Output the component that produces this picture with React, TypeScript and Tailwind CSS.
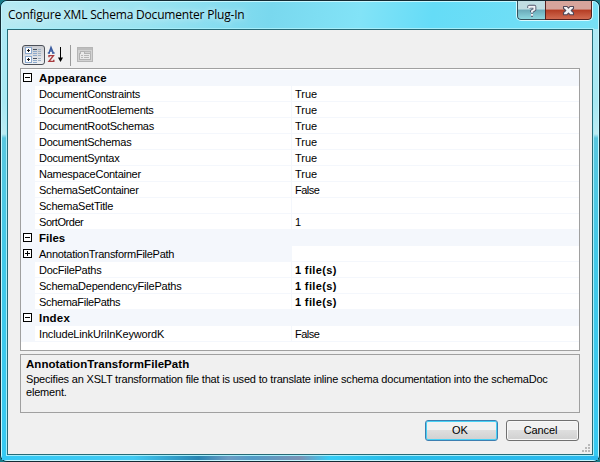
import React from "react";

type Row = { kind: "category" | "item" | "parent"; name: string; value?: string; bold?: boolean; track?: string };

const rows: Row[] = [
  { kind: "category", name: "Appearance", track: "tracking-[0.2px]" },
  { kind: "item", name: "DocumentConstraints", value: "True", track: "tracking-[-0.25px]" },
  { kind: "item", name: "DocumentRootElements", value: "True", track: "tracking-[-0.23px]" },
  { kind: "item", name: "DocumentRootSchemas", value: "True", track: "tracking-[-0.22px]" },
  { kind: "item", name: "DocumentSchemas", value: "True", track: "tracking-[-0.24px]" },
  { kind: "item", name: "DocumentSyntax", value: "True", track: "tracking-[-0.24px]" },
  { kind: "item", name: "NamespaceContainer", value: "True", track: "tracking-[-0.25px]" },
  { kind: "item", name: "SchemaSetContainer", value: "False", track: "tracking-[-0.28px]" },
  { kind: "item", name: "SchemaSetTitle", value: "", track: "tracking-[-0.22px]" },
  { kind: "item", name: "SortOrder", value: "1", track: "tracking-[-0.44px]" },
  { kind: "category", name: "Files" },
  { kind: "parent", name: "AnnotationTransformFilePath", value: "", track: "tracking-[-0.28px]" },
  { kind: "item", name: "DocFilePaths", value: "1 file(s)", bold: true, track: "tracking-[-0.25px]" },
  { kind: "item", name: "SchemaDependencyFilePaths", value: "1 file(s)", bold: true, track: "tracking-[-0.22px]" },
  { kind: "item", name: "SchemaFilePaths", value: "1 file(s)", bold: true, track: "tracking-[-0.33px]" },
  { kind: "category", name: "Index", track: "tracking-[0.2px]" },
  { kind: "item", name: "IncludeLinkUriInKeywordK", value: "False", track: "tracking-[-0.16px]" },
];

function Expander({ plus }: { plus?: boolean }) {
  return (
    <svg width="9" height="9" viewBox="0 0 9 9" shapeRendering="crispEdges" className="block">
      <rect x=".5" y=".5" width="8" height="8" fill="#fff" stroke="#000" />
      <path d={plus ? "M2 4.5h5M4.5 2v5" : "M2 4.5h5"} stroke="#000" />
    </svg>
  );
}

function GridRow({ row }: { row: Row }) {
  const category = row.kind === "category";
  const valueStyle = row.bold ? "font-bold tracking-[0.35px]" : row.value === "False" ? "tracking-[-0.5px]" : "";
  return (
    <div className="flex h-4 bg-[#f4f7fc]">
      <div className="w-[14px] shrink-0 pl-[2px] pt-[3px]">
        {row.kind !== "item" && <Expander plus={row.kind === "parent"} />}
      </div>
      {category ? (
        <div className={`flex-1 pl-1 text-[11.5px] font-bold leading-4 ${row.track ?? ""}`}>{row.name}</div>
      ) : (
        <>
          <div
            className={`w-[256px] shrink-0 border-b border-[#f4f7fc] pl-1 leading-4 ${row.track ?? ""} ${row.kind === "item" ? "bg-white" : "bg-[#f4f7fc]"}`}
          >
            {row.name}
          </div>
          <div className={`ml-px flex-1 border-b border-[#f4f7fc] bg-white pl-[3px] leading-4 ${valueStyle}`}>
            {row.value}
          </div>
        </>
      )}
    </div>
  );
}

function Toolbar() {
  return (
    <div className="flex h-[23px] shrink-0 items-start pl-[2px]">
      <div className="h-[20px] w-[23px] rounded-[3px] border border-[#4d5159] bg-gradient-to-b from-[#c9cbd0] to-[#eef0f3]">
        <svg width="21" height="18" viewBox="0 0 21 18" shapeRendering="crispEdges" className="block">
          <rect x="2.5" y="1.5" width="6" height="6" fill="#fff" stroke="#8ba9ce" />
          <rect x="2.5" y="10.5" width="6" height="6" fill="#fff" stroke="#8ba9ce" />
          <path d="M4 4.5h3M5.5 3v3M4 13.5h3M5.5 12v3" stroke="#111" />
          <path d="M10 3.5h4M10 12.5h4" stroke="#48515d" />
          <path d="M10 5.5h4M10 7.5h4M10 9.5h4M10 14.5h4M10 16.5h4" stroke="#8ca9cb" />
          <path d="M15 3.5h3M15 5.5h3M15 7.5h3M15 9.5h3M15 12.5h3M15 14.5h3" stroke="#9fb1c4" />
        </svg>
      </div>
      <svg width="16" height="20" viewBox="0 0 16 20" className="ml-[2px]" fill="none">
        <path d="M.8 8h2.2M5 8h2.6M2 8l2-5.8L6.4 8M2.8 6h2.8" stroke="#395b9f" strokeWidth="1.3" />
        <path d="M2 12.2v-1.6h4.4L2 16.4h4.8v-1.6" stroke="#a83b3e" strokeWidth="1.4" />
        <path d="M13.5 2v12" stroke="#000" />
        <path d="M11 12.5h5l-2.5 4.5z" fill="#000" />
      </svg>
      <div className="ml-[7px] h-[21px] w-px bg-[#9a9a9a]" />
      <svg width="16" height="16" viewBox="0 0 16 16" className="ml-[6px] mt-[2px]" shapeRendering="crispEdges" fill="none">
        <rect x=".5" y=".5" width="15" height="14" fill="#d2d2d2" stroke="#b5b5b5" />
        <path d="M1 1.5h14" stroke="#bdbdbd" strokeWidth="2" />
        <path d="M2.5 12.5v-6h1v-2h4v2h6v6z" fill="#e9e9e9" stroke="#b2b2b2" />
        <path d="M8 4.5h5v2" stroke="#b7b7b7" />
        <path d="M4 8.5h2M7 8.5h5M4 10.5h2M7 10.5h5" stroke="#b7b7b7" />
      </svg>
    </div>
  );
}

function CaptionButtons() {
  return (
    <div className="mr-[5px] mt-[-1px] flex h-[20px] w-[77px] overflow-hidden rounded-b-[5px] border border-t-0 border-[#d9faff]">
      <div className="flex w-[28px] justify-center rounded-bl-[4px] border-b border-l border-[#34505b] bg-gradient-to-b from-[#c0dde2] from-45% via-[#6aaab9] via-50% to-[#8ed8e0]">
        <svg width="10" height="14" viewBox="0 0 10 14" fill="none" className="mt-[3px]">
          <path d="M2.2 4V2.7h5.2v2.8L5 7.2v1M4 10.8h2" stroke="#4c5268" strokeWidth="3.8" strokeLinejoin="round" />
          <path d="M2.2 4.2V2.7h5.2v2.8L5 7.2v1.2M4 10.8h2" stroke="#f2f4f7" strokeWidth="2" />
        </svg>
      </div>
      <div className="flex flex-1 justify-center rounded-br-[4px] border-x border-b border-[#55201e] bg-gradient-to-b from-[#d6a49b] from-45% via-[#b43c23] via-50% to-[#d16b51]">
        <svg width="13" height="12" viewBox="0 0 13 12" className="mt-[4px]">
          <path
            d="M1.5 1.5h3.6l1.4 1.7 1.4-1.7h3.6v2L9.2 5.5l2.3 2.2v2H7.9L6.5 8 5.1 9.7H1.5v-2l2.3-2.2-2.3-2z"
            fill="#f3f3f5"
            stroke="#514858"
            strokeWidth="1.1"
            strokeLinejoin="round"
          />
        </svg>
      </div>
    </div>
  );
}

export default function App() {
  return (
    <div className="h-[462px] w-[600px] overflow-hidden bg-[#197b88] font-['Liberation_Sans',Arial,sans-serif] text-[11px] text-black">
      <div className="flex h-[462px] w-[600px] flex-col rounded-[7px] border border-[#142b34] bg-[#29bdea]">
        <div className="flex flex-1 flex-col rounded-[6px] border border-[#c5f7ff] bg-[linear-gradient(180deg,#b2e9f5_0px,#a8e8f2_100px,#bcebf2_132px,#59c7df_136px,#42c9e8_250px,#35c9f2_458px)]">
          <div className="flex h-[27px] shrink-0 items-start justify-between rounded-t-[5px] bg-[linear-gradient(100deg,#b7eaf3_0%,#99e3f1_25%,#79d8ee_45%,#82e3f7_60%,#65dcf7_72%,#78e0f5_100%)]">
            <h1 className="pl-[6px] pt-[4px] font-['Open_Sans',sans-serif] text-[12px] leading-[18px] tracking-[-0.2px] [text-shadow:0_0_7px_white]">
              Configure XML Schema Documenter Plug-In
            </h1>
            <CaptionButtons />
          </div>
          <main className="mx-[5px] flex h-[426px] shrink-0 flex-col border border-[#276a76] bg-[#f0f0f0] px-3 pt-[15px] shadow-[0_0_0_1px_#a6eefa]">
            <Toolbar />
            <div className="h-[283px] shrink-0 border border-[#a0a0a0] bg-white pt-px">
              {rows.map((row) => (
                <GridRow key={row.name} row={row} />
              ))}
            </div>
            <div className="mt-[3px] h-[59px] shrink-0 border border-[#a0a0a0] pl-[5px] pt-[3px]">
              <h2 className="text-[11.5px] font-bold leading-[13px] tracking-[0.06px]">AnnotationTransformFilePath</h2>
              <p className="mt-[2px] whitespace-nowrap leading-[13px] tracking-[-0.19px]">
                Specifies an XSLT transformation file that is used to translate inline schema documentation into the schemaDoc
                <br />
                element.
              </p>
            </div>
            <div className="mr-px mt-[7px] flex shrink-0 justify-end gap-[8px]">
              <button className="h-[21px] w-[73px] rounded-[3px] border border-[#3c7fb1] bg-gradient-to-b from-[#f1f1f1] from-48% via-[#dedede] via-50% to-[#d0d0d0] pr-[3px] shadow-[inset_0_0_0_1px_#48d1f5]">
                OK
              </button>
              <button className="h-[21px] w-[73px] rounded-[3px] border border-[#707070] bg-gradient-to-b from-[#f1f1f1] from-48% via-[#dedede] via-50% to-[#d0d0d0] pr-[4px] tracking-[-0.15px] shadow-[inset_0_0_0_1px_#f8f8f8]">
                Cancel
              </button>
            </div>
            <svg width="9" height="9" viewBox="0 0 9 9" className="-mr-[11px] mt-[3px] shrink-0 self-end" fill="#b9b9b9">
              <path d="M6 0h2v2H6zM3 3h2v2H3zM6 3h2v2H6zM0 6h2v2H0zM3 6h2v2H3zM6 6h2v2H6z" />
            </svg>
          </main>
          <div className="mt-px h-[4px] bg-[linear-gradient(90deg,#35c9f5_0%,#40c9f2_22%,#2884b1_33%,#6b9bc3_38%,#519bc6_42%,#7992b5_50%,#35ccf5_55%,#28bce8_65%,#2bb9ee_100%)]" />
        </div>
      </div>
    </div>
  );
}
